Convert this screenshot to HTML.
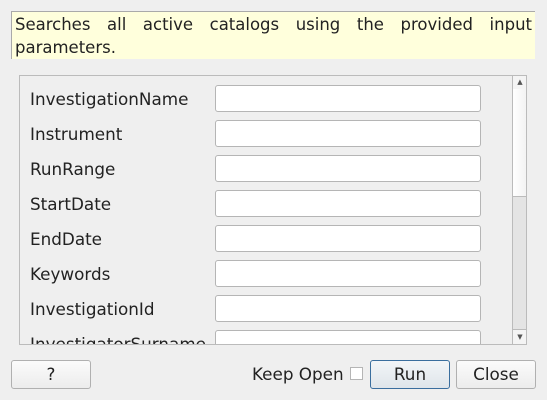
<!DOCTYPE html><html><head><style>
body{margin:0;width:547px;height:400px;background:#efefef;font-family:"DejaVu Sans","Liberation Sans",sans-serif;font-size:16px;color:#222;position:relative;overflow:hidden}
.a{position:absolute}
.desc{left:11px;top:11px;width:524px;height:48px;background:#ffffdc;border-left:1px solid #aaa;border-top:1px solid #aaa;box-sizing:border-box;padding:1px 3px;line-height:23px;text-align:justify;text-align-last:left;font-size:16.5px}
.area{left:19px;top:75px;width:508px;height:270px;border:1px solid #bbb;box-sizing:border-box;overflow:hidden}
.lbl{left:10px;font-size:16.8px}
.inp{left:195px;width:266px;height:27px;background:#fff;border:1px solid #b5b5b5;border-radius:3px;box-sizing:border-box}
.btn{top:360px;height:29px;border:1px solid #b0b0b0;border-radius:3px;box-sizing:border-box;background:linear-gradient(#fbfbfb,#ececec);text-align:center;line-height:27px;font-size:16.8px}
</style></head><body>
<div class="a desc">Searches all active catalogs using the provided input parameters.</div>
<div class="a area">
<div class="a lbl" style="top:13px">InvestigationName</div><div class="a inp" style="top:9px"></div>
<div class="a lbl" style="top:48px">Instrument</div><div class="a inp" style="top:44px"></div>
<div class="a lbl" style="top:83px">RunRange</div><div class="a inp" style="top:79px"></div>
<div class="a lbl" style="top:118px">StartDate</div><div class="a inp" style="top:114px"></div>
<div class="a lbl" style="top:153px">EndDate</div><div class="a inp" style="top:149px"></div>
<div class="a lbl" style="top:188px">Keywords</div><div class="a inp" style="top:184px"></div>
<div class="a lbl" style="top:223px">InvestigationId</div><div class="a inp" style="top:219px"></div>
<div class="a lbl" style="top:258px">InvestigatorSurname</div><div class="a inp" style="top:254px"></div>
<div class="a" style="left:492px;top:-1px;width:15px;height:270px;background:#e4e4e4;border-left:1px solid #bbb;box-sizing:border-box">
<div class="a" style="left:0;top:0;width:14px;height:14px;border-bottom:1px solid #bbb;background:#f4f4f4;font-size:7px;text-align:center;line-height:14px;color:#555">▲</div>
<div class="a" style="left:0;top:14px;width:14px;height:107px;border-bottom:1px solid #bbb;background:linear-gradient(90deg,#fff,#f2f2f2)"></div>
<div class="a" style="left:0;top:254px;width:14px;height:15px;border-top:1px solid #bbb;background:#f4f4f4;font-size:7px;text-align:center;line-height:14px;color:#555">▼</div>
</div>
</div>
<div class="a btn" style="left:11px;width:80px">?</div>
<div class="a" style="left:252px;top:364px;font-size:16.8px">Keep Open</div>
<div class="a" style="left:350px;top:367px;width:13px;height:13px;background:#fff;border:1px solid #b5b5b5;box-sizing:border-box"></div>
<div class="a btn" style="left:370px;width:80px;border-color:#3a6e9e;background:linear-gradient(#f2f5f8,#dfe5ea)">Run</div>
<div class="a btn" style="left:456px;width:80px">Close</div>
</body></html>
